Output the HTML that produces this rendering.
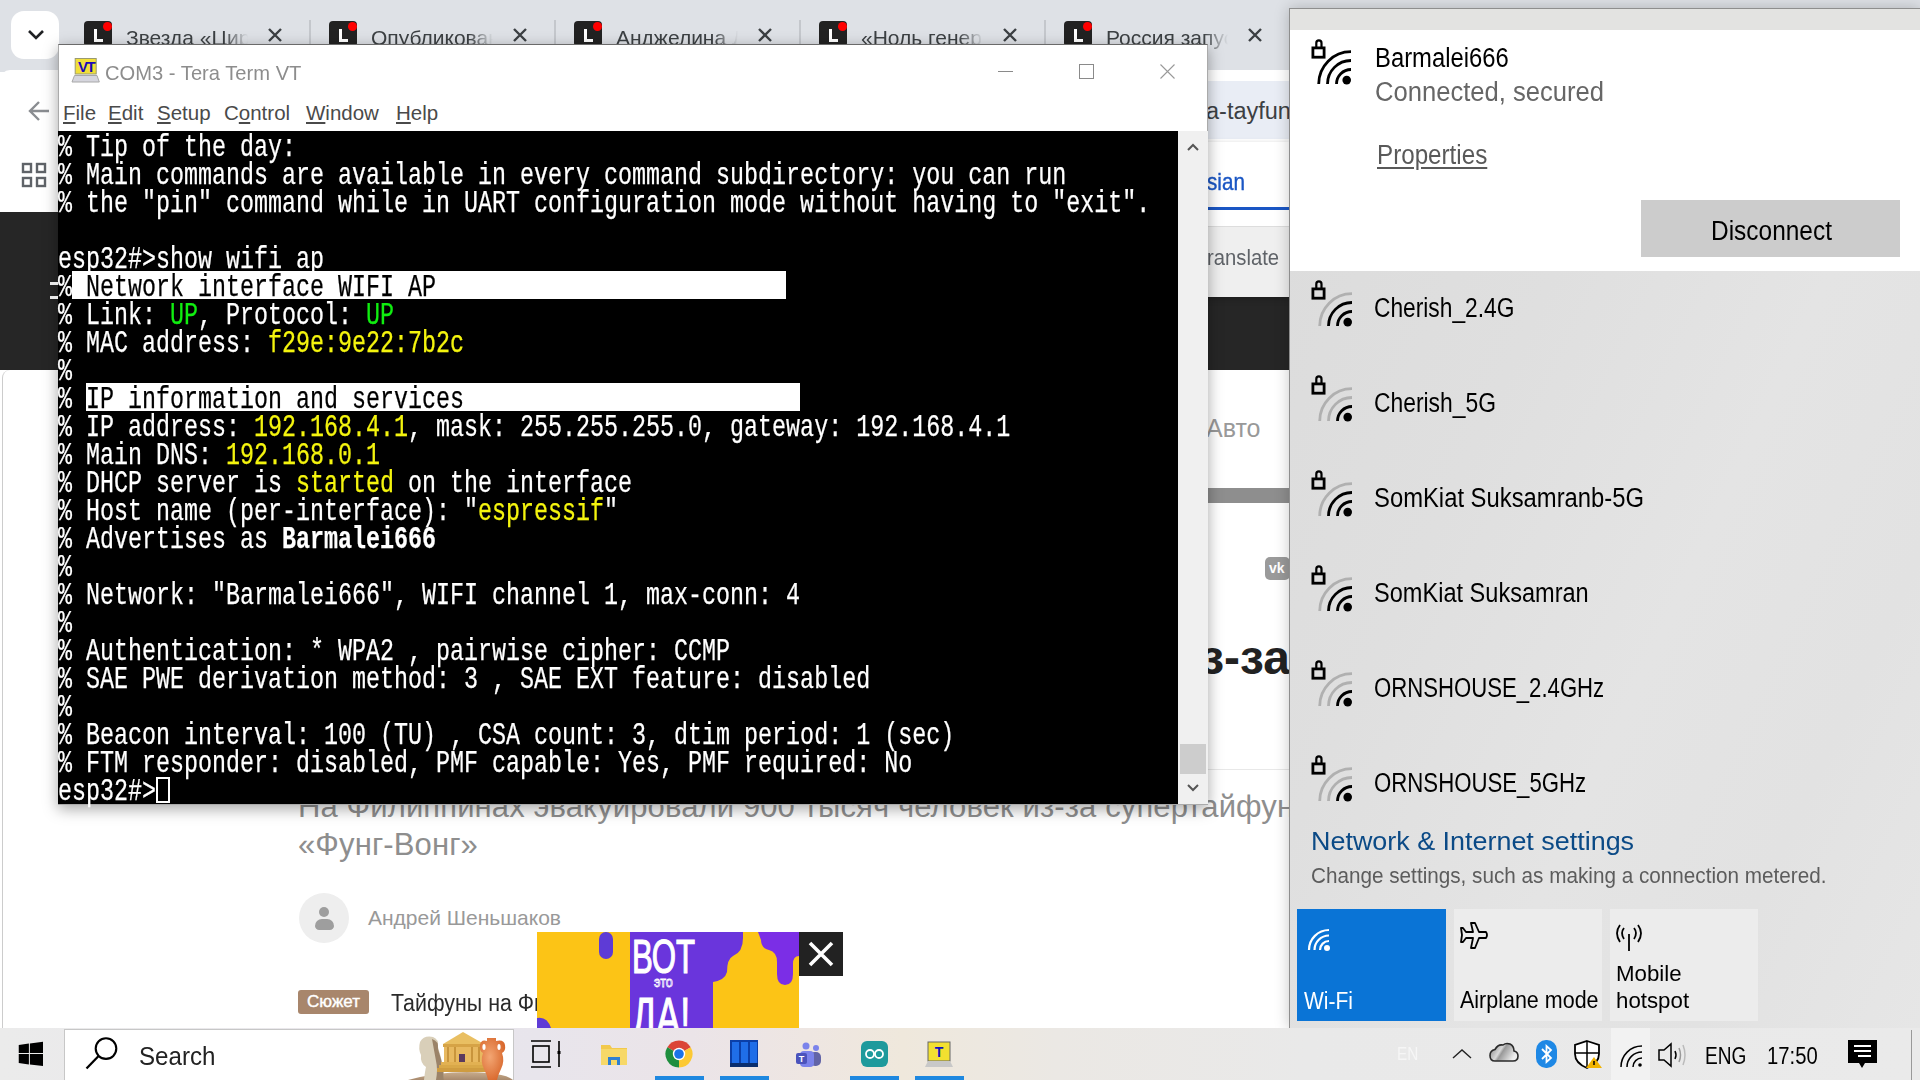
<!DOCTYPE html>
<html><head><meta charset="utf-8">
<style>
*{margin:0;padding:0;box-sizing:border-box}
html,body{width:1920px;height:1080px;overflow:hidden;background:#fff;font-family:"Liberation Sans",sans-serif}
body{position:relative}
.a{position:absolute}
.nw{white-space:nowrap}
.tab-ico{width:28px;height:26px;background:#222;border-radius:4px}
.tab-ico i{position:absolute;left:10px;top:8px;width:3px;height:13px;background:#fff}
.tab-ico b{position:absolute;left:10px;top:18px;width:9px;height:3px;background:#fff}
.tab-ico u{position:absolute;left:19px;top:1px;width:9px;height:9px;background:#f00;border-radius:50%}
.tab-txt{font-size:21px;color:#3c4043;white-space:nowrap;overflow:hidden;width:122px;height:30px;
 -webkit-mask-image:linear-gradient(to right,#000 80%,transparent)}
.tab-sep{width:2px;height:24px;background:#c4c7cc}
.term{font-family:"Liberation Mono",monospace;font-size:32px;line-height:28px;color:#fff;white-space:pre;transform:scaleX(0.72917);transform-origin:0 0;-webkit-text-stroke:0.25px currentColor}
.y{color:#f4f40e}.g{color:#10ee10}.inv{color:#000}
.fly{font-family:"Liberation Sans",sans-serif}
.net{font-size:22px;color:#000}
</style></head><body>

<div class="a" style="left:0;top:0;width:1920px;height:72px;background:#dee1e6"></div>
<div class="a" style="left:11px;top:11px;width:48px;height:48px;background:#fff;border-radius:13px"></div>
<svg class="a" style="left:25px;top:28px" width="22" height="14" viewBox="0 0 22 14"><path d="M4 3 L11 10 L18 3" stroke="#202124" stroke-width="2.6" fill="none"/></svg>
<div class="a tab-ico" style="left:84px;top:20.5px"><i></i><b></b><u></u></div>
<div class="a tab-txt" style="left:126px;top:25.5px">Звезда «Цирка»</div>
<svg class="a" style="left:268px;top:28px" width="14" height="14" viewBox="0 0 14 14"><path d="M1 1L13 13M13 1L1 13" stroke="#3c4043" stroke-width="2.4"/></svg>
<div class="a tab-ico" style="left:329px;top:20.5px"><i></i><b></b><u></u></div>
<div class="a tab-txt" style="left:371px;top:25.5px">Опубликовано</div>
<svg class="a" style="left:513px;top:28px" width="14" height="14" viewBox="0 0 14 14"><path d="M1 1L13 13M13 1L1 13" stroke="#3c4043" stroke-width="2.4"/></svg>
<div class="a tab-sep" style="left:309px;top:20px"></div>
<div class="a tab-ico" style="left:574px;top:20.5px"><i></i><b></b><u></u></div>
<div class="a tab-txt" style="left:616px;top:25.5px">Анджелина Джоли</div>
<svg class="a" style="left:758px;top:28px" width="14" height="14" viewBox="0 0 14 14"><path d="M1 1L13 13M13 1L1 13" stroke="#3c4043" stroke-width="2.4"/></svg>
<div class="a tab-sep" style="left:554px;top:20px"></div>
<div class="a tab-ico" style="left:819px;top:20.5px"><i></i><b></b><u></u></div>
<div class="a tab-txt" style="left:861px;top:25.5px">«Ноль генерации</div>
<svg class="a" style="left:1003px;top:28px" width="14" height="14" viewBox="0 0 14 14"><path d="M1 1L13 13M13 1L1 13" stroke="#3c4043" stroke-width="2.4"/></svg>
<div class="a tab-sep" style="left:799px;top:20px"></div>
<div class="a tab-ico" style="left:1064px;top:20.5px"><i></i><b></b><u></u></div>
<div class="a tab-txt" style="left:1106px;top:25.5px">Россия запускает</div>
<svg class="a" style="left:1248px;top:28px" width="14" height="14" viewBox="0 0 14 14"><path d="M1 1L13 13M13 1L1 13" stroke="#3c4043" stroke-width="2.4"/></svg>
<div class="a tab-sep" style="left:1044px;top:20px"></div>
<div class="a" style="left:0;top:70px;width:1290px;height:85px;background:#fff;border-top-left-radius:10px"></div>
<svg class="a" style="left:27px;top:99px" width="24" height="24" viewBox="0 0 24 24"><path d="M22 12H4M12 3L3 12L12 21" stroke="#8a8d91" stroke-width="2.4" fill="none"/></svg>
<div class="a" style="left:900px;top:81px;width:390px;height:58px;background:#e9edf5;border-radius:30px 0 0 30px"></div>
<div class="a nw" style="left:1206px;top:97.5px;font-size:23.5px;color:#3c4043">a-tayfun</div>
<svg class="a" style="left:21px;top:162px" width="26" height="26" viewBox="0 0 26 26"><g fill="none" stroke="#5f6368" stroke-width="2.4"><rect x="2" y="2" width="8" height="8"/><rect x="16" y="2" width="8" height="8"/><rect x="2" y="16" width="8" height="8"/><rect x="16" y="16" width="8" height="8"/></g></svg>
<div class="a" style="left:0;top:212px;width:1290px;height:158px;background:#262626"></div>
<div class="a" style="left:1000px;top:142px;width:290px;height:155px;background:#fff;box-shadow:0 2px 6px rgba(0,0,0,.25)"></div>
<div class="a nw" style="left:1207px;top:168px;font-size:24px;color:#1a56c4;-webkit-text-stroke:0.4px #1a56c4;transform:scaleX(0.86);transform-origin:0 0">sian</div>
<div class="a" style="left:1100px;top:207px;width:190px;height:3px;background:#1a56c4"></div>
<div class="a" style="left:1000px;top:226px;width:290px;height:71px;background:#efefef;border-top:1px solid #ddd"></div>
<div class="a nw" style="left:1207px;top:245px;font-size:22.5px;color:#5f6368;transform:scaleX(0.9);transform-origin:0 0">ranslate</div>
<div class="a" style="left:2px;top:370px;width:1288px;height:660px;background:#fff;border-top-left-radius:8px;border-left:1px solid #ccc"></div>
<div class="a nw" style="left:1206px;top:414px;font-size:25px;color:#999">Авто</div>
<div class="a" style="left:1000px;top:488px;width:290px;height:15px;background:#8e8e8e"></div>
<div class="a" style="left:1265px;top:557px;width:25px;height:23px;background:#9a9a9a;border-radius:5px"></div><div class="a nw" style="left:1269px;top:560px;font-size:14px;font-weight:bold;color:#fff">vk</div>
<div class="a nw" style="left:1000px;top:630px;font-size:48px;color:#222;font-weight:bold;width:290px;text-align:right;overflow:hidden">из-за</div>
<div class="a" style="left:298px;top:769px;width:992px;height:1px;background:#e8e8e8"></div>
<div class="a nw" style="left:298px;top:788px;font-size:31px;color:#8e8e8e;line-height:38px;width:992px;overflow:hidden;letter-spacing:0.12px">На Филиппинах эвакуировали 900 тысяч человек из-за супертайфуна<br>«Фунг-Вонг»</div>
<div class="a" style="left:299px;top:893px;width:50px;height:50px;border-radius:50%;background:#eee"></div>
<div class="a" style="left:319px;top:906.5px;width:10px;height:10px;border-radius:50%;background:#9e9e9e"></div>
<div class="a" style="left:315px;top:919px;width:19px;height:11px;border-radius:10px 10px 6px 6px;background:#9e9e9e"></div>
<div class="a nw" style="left:368px;top:906px;font-size:21px;color:#999">Андрей Шеньшаков</div>
<div class="a nw" style="left:298px;top:990px;width:71px;height:24px;background:#a8866c;border-radius:3px;color:#fff;font-size:17px;line-height:24px;text-align:center;-webkit-text-stroke:0.4px #fff">Сюжет</div>
<div class="a nw" style="left:391px;top:990px;font-size:23px;color:#2a2a2a;transform:scaleX(0.93);transform-origin:0 0">Тайфуны на Филиппинах</div>
<svg class="a" style="left:537px;top:932px" width="306" height="96" viewBox="0 0 306 96">
<rect x="0" y="0" width="262" height="96" fill="#fcc416"/>
<path d="M93 0 H206 V6 Q206 20 196 24 Q190 27 190 40 Q188 48 176 50 V96 H93 Z" fill="#6a35dc"/>
<path d="M221 0 H262 V24 Q256 24 256 32 V42 Q256 53 248 53 Q240 53 240 42 V30 Q240 20 232 18 Q224 16 224 8 Z" fill="#7b2ee6"/>
<rect x="62" y="0" width="14" height="27" rx="7" fill="#5e3bd6"/>
<path d="M0 86 Q10 84 14 96 H0Z" fill="#5e3bd6"/>
<g fill="#fff" font-family="Liberation Sans" font-weight="bold">
<text x="0" y="0" font-size="40" font-weight="normal" stroke="#fff" stroke-width="1" transform="translate(95,41) scale(0.78,1.2)">ВОТ</text>
<text x="0" y="0" font-size="14" transform="translate(117,55) scale(0.9,1)" fill="none" stroke="#fff" stroke-width="0.8" font-weight="normal">это</text>
<text x="0" y="0" font-size="46" font-weight="normal" stroke="#fff" stroke-width="1" transform="translate(95,104) scale(0.78,1.2)">ДА!</text>
</g>
<rect x="262" y="0" width="44" height="44" fill="#222"/>
<path d="M273 11L295 33M295 11L273 33" stroke="#fff" stroke-width="3.6"/>
</svg>
<div class="a" style="left:58px;top:44px;width:1150px;height:761px;background:#fff;border:1px solid #aaa;border-top-color:#6a6a6a;box-shadow:0 4px 14px rgba(0,0,0,.35)"></div>
<svg class="a" style="left:71px;top:57px" width="30" height="27" viewBox="0 0 30 27">
<rect x="4.2" y="1.5" width="21" height="15.5" fill="#f1df3a" stroke="#9a9a70" stroke-width="1"/>
<text x="15" y="14.6" font-family="Liberation Sans" font-weight="bold" font-size="15" fill="#1a0ab8" text-anchor="middle" letter-spacing="-1.5">VT</text>
<path d="M3.5 18.5 H26 L28.3 25 H1Z" fill="#d6d6de" stroke="#a8a8a8" stroke-width="1"/>
</svg>
<div class="a nw" style="left:105px;top:61px;font-size:21px;color:#8d8d8d;transform:scaleX(0.96);transform-origin:0 0">COM3 - Tera Term VT</div>
<div class="a" style="left:998px;top:71px;width:15px;height:1px;background:#8a8a8a"></div>
<div class="a" style="left:1079px;top:64px;width:15px;height:15px;border:1px solid #8a8a8a"></div>
<svg class="a" style="left:1160px;top:64px" width="15" height="15" viewBox="0 0 15 15"><path d="M0.5 0.5L14.5 14.5M14.5 0.5L0.5 14.5" stroke="#999" stroke-width="1.1"/></svg>
<div class="a nw" style="left:63px;top:101px;font-size:20.5px;color:#4a4a4a"><u>F</u>ile</div>
<div class="a nw" style="left:108px;top:101px;font-size:20.5px;color:#4a4a4a"><u>E</u>dit</div>
<div class="a nw" style="left:157px;top:101px;font-size:20.5px;color:#4a4a4a"><u>S</u>etup</div>
<div class="a nw" style="left:224px;top:101px;font-size:20.5px;color:#4a4a4a">C<u>o</u>ntrol</div>
<div class="a nw" style="left:306px;top:101px;font-size:20.5px;color:#4a4a4a"><u>W</u>indow</div>
<div class="a nw" style="left:396px;top:101px;font-size:20.5px;color:#4a4a4a"><u>H</u>elp</div>
<div class="a" style="left:58px;top:131px;width:1120px;height:673px;background:#000"></div>
<div class="a" style="left:1178px;top:131px;width:30px;height:673px;background:#f0f0f0"></div>
<svg class="a" style="left:1186px;top:142px" width="14" height="10" viewBox="0 0 14 10"><path d="M2 8L7 3L12 8" stroke="#555" stroke-width="2" fill="none"/></svg>
<div class="a" style="left:1180px;top:744px;width:26px;height:30px;background:#cdcdcd"></div>
<svg class="a" style="left:1186px;top:783px" width="14" height="10" viewBox="0 0 14 10"><path d="M2 2L7 7L12 2" stroke="#555" stroke-width="2" fill="none"/></svg>
<div class="a" style="left:72px;top:271px;width:714px;height:28px;background:#fff"></div><div class="a" style="left:86px;top:383px;width:714px;height:28px;background:#fff"></div>
<div class="a term" style="left:58px;top:133.5px">% Tip of the day:
% Main commands are available in every command subdirectory: you can run
% the ″pin″ command while in UART configuration mode without having to ″exit″.

esp32#>show wifi ap
%<span class="inv"> Network interface WIFI AP                         </span>
% Link: <span class="g">UP</span>, Protocol: <span class="g">UP</span>
% MAC address: <span class="y">f29e:9e22:7b2c</span>
%
%<span class="inv"> IP information and services                        </span>
% IP address: <span class="y">192.168.4.1</span>, mask: 255.255.255.0, gateway: 192.168.4.1
% Main DNS: <span class="y">192.168.0.1</span>
% DHCP server is <span class="y">started</span> on the interface
% Host name (per-interface): ″<span class="y">espressif</span>″
% Advertises as <b>Barmalei666</b>
%
% Network: ″Barmalei666″, WIFI channel 1, max-conn: 4
%
% Authentication: * WPA2 , pairwise cipher: CCMP
% SAE PWE derivation method: 3 , SAE EXT feature: disabled
%
% Beacon interval: 100 (TU) , CSA count: 3, dtim period: 1 (sec)
% FTM responder: disabled, PMF capable: Yes, PMF required: No
esp32#></div>
<div class="a" style="left:156px;top:777px;width:14px;height:26px;border:2px solid #fff"></div>
<div class="a" style="left:50px;top:282px;width:8px;height:3px;background:#e8e8e8"></div><div class="a" style="left:50px;top:296px;width:8px;height:3px;background:#e8e8e8"></div>
<div class="a" style="left:1289px;top:8px;width:631px;height:1020px;background:linear-gradient(115deg,#dbdbdb 0%,#dfdfdf 35%,#e4e4e4 60%,#e2e2e2 80%,#e6e6e6 100%);border-left:1px solid #8e8e8e;border-top:1px solid #8e8e8e;box-shadow:0 0 14px rgba(0,0,0,.22)"></div>
<div class="a" style="left:1290px;top:9px;width:630px;height:21px;background:#e3e3e1"></div>
<div class="a" style="left:1290px;top:30px;width:630px;height:241px;background:#fff"></div>
<svg class="a" style="left:1310px;top:38px" width="17" height="22" viewBox="0 0 17 22"><rect x="2.9" y="9.9" width="11.2" height="9.3" fill="none" stroke="#000" stroke-width="2.8"/><path d="M6.3 9.5 V5 A2.6 2.6 0 0 1 11.5 5 V9.5" fill="none" stroke="#000" stroke-width="2.2"/></svg>
<svg class="a" style="left:1315px;top:48px" width="40" height="40" viewBox="-36 -36 40 40"><g transform="translate(0,0)"><path d="M-14.5 0 A14.5 14.5 0 0 1 0 -14.5" stroke="#000" stroke-width="2.8" fill="none" transform="translate(0,0)"/><path d="M-23.5 0 A23.5 23.5 0 0 1 0 -23.5" stroke="#000" stroke-width="2.8" fill="none" transform="translate(0,0)"/><path d="M-32.3 0 A32.3 32.3 0 0 1 0 -32.3" stroke="#000" stroke-width="2.8" fill="none" transform="translate(0,0)"/><circle cx="-4.3" cy="-3.9" r="4.3" fill="#000"/></g></svg>
<div class="a nw fly" style="left:1375px;top:43px;font-size:27px;color:#000;transform:scaleX(0.882);transform-origin:0 0;">Barmalei666</div>
<div class="a nw fly" style="left:1375px;top:77px;font-size:27px;color:#666;transform:scaleX(0.948);transform-origin:0 0;">Connected, secured</div>
<div class="a nw fly" style="left:1377px;top:140px;font-size:27px;color:#595959;transform:scaleX(0.896);transform-origin:0 0;text-decoration:underline;text-underline-offset:3px">Properties</div>
<div class="a" style="left:1641px;top:200px;width:259px;height:57px;background:#cccccc"></div>
<div class="a nw fly" style="left:1711px;top:215px;font-size:27.5px;color:#000;transform:scaleX(0.889);transform-origin:0 0;">Disconnect</div>
<svg class="a" style="left:1310px;top:279px" width="17" height="22" viewBox="0 0 17 22"><rect x="2.9" y="9.9" width="11.2" height="9.3" fill="none" stroke="#000" stroke-width="2.8"/><path d="M6.3 9.5 V5 A2.6 2.6 0 0 1 11.5 5 V9.5" fill="none" stroke="#000" stroke-width="2.2"/></svg>
<svg class="a" style="left:1316px;top:290px" width="40" height="40" viewBox="-36 -36 40 40"><g transform="translate(0,0)"><path d="M-14.5 0 A14.5 14.5 0 0 1 0 -14.5" stroke="#000" stroke-width="2.8" fill="none" transform="translate(0,0)"/><path d="M-23.5 0 A23.5 23.5 0 0 1 0 -23.5" stroke="#000" stroke-width="2.8" fill="none" transform="translate(0,0)"/><path d="M-32.3 0 A32.3 32.3 0 0 1 0 -32.3" stroke="#b0b0b0" stroke-width="2.8" fill="none" transform="translate(0,0)"/><circle cx="-4.3" cy="-3.9" r="4.3" fill="#000"/></g></svg>
<div class="a nw fly" style="left:1374px;top:293px;font-size:27px;color:#000;transform:scaleX(0.8425925925925926);transform-origin:0 0;">Cherish_2.4G</div>
<svg class="a" style="left:1310px;top:374px" width="17" height="22" viewBox="0 0 17 22"><rect x="2.9" y="9.9" width="11.2" height="9.3" fill="none" stroke="#000" stroke-width="2.8"/><path d="M6.3 9.5 V5 A2.6 2.6 0 0 1 11.5 5 V9.5" fill="none" stroke="#000" stroke-width="2.2"/></svg>
<svg class="a" style="left:1316px;top:385px" width="40" height="40" viewBox="-36 -36 40 40"><g transform="translate(0,0)"><path d="M-14.5 0 A14.5 14.5 0 0 1 0 -14.5" stroke="#000" stroke-width="2.8" fill="none" transform="translate(0,0)"/><path d="M-23.5 0 A23.5 23.5 0 0 1 0 -23.5" stroke="#b0b0b0" stroke-width="2.8" fill="none" transform="translate(0,0)"/><path d="M-32.3 0 A32.3 32.3 0 0 1 0 -32.3" stroke="#b0b0b0" stroke-width="2.8" fill="none" transform="translate(0,0)"/><circle cx="-4.3" cy="-3.9" r="4.3" fill="#000"/></g></svg>
<div class="a nw fly" style="left:1374px;top:388px;font-size:27px;color:#000;transform:scaleX(0.8464444444444444);transform-origin:0 0;">Cherish_5G</div>
<svg class="a" style="left:1310px;top:469px" width="17" height="22" viewBox="0 0 17 22"><rect x="2.9" y="9.9" width="11.2" height="9.3" fill="none" stroke="#000" stroke-width="2.8"/><path d="M6.3 9.5 V5 A2.6 2.6 0 0 1 11.5 5 V9.5" fill="none" stroke="#000" stroke-width="2.2"/></svg>
<svg class="a" style="left:1316px;top:480px" width="40" height="40" viewBox="-36 -36 40 40"><g transform="translate(0,0)"><path d="M-14.5 0 A14.5 14.5 0 0 1 0 -14.5" stroke="#000" stroke-width="2.8" fill="none" transform="translate(0,0)"/><path d="M-23.5 0 A23.5 23.5 0 0 1 0 -23.5" stroke="#000" stroke-width="2.8" fill="none" transform="translate(0,0)"/><path d="M-32.3 0 A32.3 32.3 0 0 1 0 -32.3" stroke="#b0b0b0" stroke-width="2.8" fill="none" transform="translate(0,0)"/><circle cx="-4.3" cy="-3.9" r="4.3" fill="#000"/></g></svg>
<div class="a nw fly" style="left:1374px;top:483px;font-size:27px;color:#000;transform:scaleX(0.8820740740740741);transform-origin:0 0;">SomKiat Suksamranb-5G</div>
<svg class="a" style="left:1310px;top:564px" width="17" height="22" viewBox="0 0 17 22"><rect x="2.9" y="9.9" width="11.2" height="9.3" fill="none" stroke="#000" stroke-width="2.8"/><path d="M6.3 9.5 V5 A2.6 2.6 0 0 1 11.5 5 V9.5" fill="none" stroke="#000" stroke-width="2.2"/></svg>
<svg class="a" style="left:1316px;top:575px" width="40" height="40" viewBox="-36 -36 40 40"><g transform="translate(0,0)"><path d="M-14.5 0 A14.5 14.5 0 0 1 0 -14.5" stroke="#000" stroke-width="2.8" fill="none" transform="translate(0,0)"/><path d="M-23.5 0 A23.5 23.5 0 0 1 0 -23.5" stroke="#000" stroke-width="2.8" fill="none" transform="translate(0,0)"/><path d="M-32.3 0 A32.3 32.3 0 0 1 0 -32.3" stroke="#b0b0b0" stroke-width="2.8" fill="none" transform="translate(0,0)"/><circle cx="-4.3" cy="-3.9" r="4.3" fill="#000"/></g></svg>
<div class="a nw fly" style="left:1374px;top:578px;font-size:27px;color:#000;transform:scaleX(0.8724444444444445);transform-origin:0 0;">SomKiat Suksamran</div>
<svg class="a" style="left:1310px;top:659px" width="17" height="22" viewBox="0 0 17 22"><rect x="2.9" y="9.9" width="11.2" height="9.3" fill="none" stroke="#000" stroke-width="2.8"/><path d="M6.3 9.5 V5 A2.6 2.6 0 0 1 11.5 5 V9.5" fill="none" stroke="#000" stroke-width="2.2"/></svg>
<svg class="a" style="left:1316px;top:670px" width="40" height="40" viewBox="-36 -36 40 40"><g transform="translate(0,0)"><path d="M-14.5 0 A14.5 14.5 0 0 1 0 -14.5" stroke="#000" stroke-width="2.8" fill="none" transform="translate(0,0)"/><path d="M-23.5 0 A23.5 23.5 0 0 1 0 -23.5" stroke="#b0b0b0" stroke-width="2.8" fill="none" transform="translate(0,0)"/><path d="M-32.3 0 A32.3 32.3 0 0 1 0 -32.3" stroke="#b0b0b0" stroke-width="2.8" fill="none" transform="translate(0,0)"/><circle cx="-4.3" cy="-3.9" r="4.3" fill="#000"/></g></svg>
<div class="a nw fly" style="left:1374px;top:673px;font-size:27px;color:#000;transform:scaleX(0.8204444444444445);transform-origin:0 0;">ORNSHOUSE_2.4GHz</div>
<svg class="a" style="left:1310px;top:754px" width="17" height="22" viewBox="0 0 17 22"><rect x="2.9" y="9.9" width="11.2" height="9.3" fill="none" stroke="#000" stroke-width="2.8"/><path d="M6.3 9.5 V5 A2.6 2.6 0 0 1 11.5 5 V9.5" fill="none" stroke="#000" stroke-width="2.2"/></svg>
<svg class="a" style="left:1316px;top:765px" width="40" height="40" viewBox="-36 -36 40 40"><g transform="translate(0,0)"><path d="M-14.5 0 A14.5 14.5 0 0 1 0 -14.5" stroke="#000" stroke-width="2.8" fill="none" transform="translate(0,0)"/><path d="M-23.5 0 A23.5 23.5 0 0 1 0 -23.5" stroke="#b0b0b0" stroke-width="2.8" fill="none" transform="translate(0,0)"/><path d="M-32.3 0 A32.3 32.3 0 0 1 0 -32.3" stroke="#b0b0b0" stroke-width="2.8" fill="none" transform="translate(0,0)"/><circle cx="-4.3" cy="-3.9" r="4.3" fill="#000"/></g></svg>
<div class="a nw fly" style="left:1374px;top:768px;font-size:27px;color:#000;transform:scaleX(0.8223703703703704);transform-origin:0 0;">ORNSHOUSE_5GHz</div>
<div class="a nw fly" style="left:1311px;top:826px;font-size:26px;color:#0b4a86;transform:scaleX(1.035);transform-origin:0 0;">Network &amp; Internet settings</div>
<div class="a nw fly" style="left:1311px;top:862.5px;font-size:22.5px;color:#5c5c5c;transform:scaleX(0.92);transform-origin:0 0;">Change settings, such as making a connection metered.</div>
<div class="a" style="left:1297px;top:909px;width:149px;height:112px;background:#0a74d6"></div>
<svg class="a" style="left:1307px;top:928px" width="26" height="24" viewBox="0 0 26 24"><g fill="none" stroke="#fff" stroke-width="2.2"><path d="M2 22A20 20 0 0 1 22 2"/><path d="M7.5 22A14.5 14.5 0 0 1 22 7.5"/><path d="M13 22A9 9 0 0 1 22 13"/></g><circle cx="20" cy="20" r="3" fill="#fff"/></svg>
<div class="a nw fly" style="left:1304px;top:987.5px;font-size:23.5px;color:#fff;transform:scaleX(0.893);transform-origin:0 0;">Wi-Fi</div>
<div class="a" style="left:1454px;top:909px;width:148px;height:112px;background:#ececec"></div>
<svg class="a" style="left:1459px;top:920px" width="30" height="32" viewBox="0 0 30 32"><path d="M12 3 L16 3 L20 12 L27 12 Q29 15 27 18 L20 18 L16 28 L12 28 L14 18 L7 18 L4 22 L2 22 L3 15 L2 8 L4 8 L7 12 L14 12 Z" fill="none" stroke="#000" stroke-width="1.8" stroke-linejoin="round"/></svg>
<div class="a nw fly" style="left:1460px;top:987px;font-size:23px;color:#000;transform:scaleX(0.934);transform-origin:0 0;">Airplane mode</div>
<div class="a" style="left:1610px;top:909px;width:148px;height:112px;background:#ececec"></div>
<svg class="a" style="left:1614px;top:922px" width="30" height="30" viewBox="0 0 30 30"><g fill="none" stroke="#000" stroke-width="1.8"><path d="M15 12V29"/><path d="M10 6Q6 11 10 17"/><path d="M20 6Q24 11 20 17"/><path d="M6 3Q0 11 6 20"/><path d="M24 3Q30 11 24 20"/></g></svg>
<div class="a nw fly" style="left:1616px;top:959.5px;font-size:22.5px;color:#000;transform:scaleX(0.99);transform-origin:0 0;line-height:27.5px">Mobile<br>hotspot</div>
<div class="a" style="left:0;top:1028px;width:1920px;height:52px;background:linear-gradient(90deg,#ebebeb 0%,#e8e5ec 28%,#ebe4e8 36%,#eee6e2 42%,#efe8dc 47%,#ebe8e4 55%,#e9e9e9 68%,#eaeaea 100%)"></div>
<svg class="a" style="left:0px;top:1028px" width="50" height="52" viewBox="0 1028 50 52"><g fill="#000"><path d="M18.75 1044.9 L28.9 1043.5 V1053.1 H18.75Z"/><path d="M29.9 1043.4 L43 1041.75 V1053.1 H29.9Z"/><path d="M18.75 1054.1 H28.9 V1064.5 L18.75 1063Z"/><path d="M29.9 1054.1 H43 V1066 L29.9 1064.6Z"/></g></svg>
<div class="a" style="left:64px;top:1029px;width:450px;height:51px;background:#fff;border:1px solid #c7c7c7;border-bottom:none"></div>
<svg class="a" style="left:80px;top:1033px" width="40" height="40" viewBox="0 0 40 40"><circle cx="26" cy="15.6" r="10.3" fill="none" stroke="#000" stroke-width="2.1"/><path d="M18.6 23L6.5 35.5" stroke="#000" stroke-width="2.3"/></svg>
<div class="a nw" style="left:139px;top:1041.5px;font-size:25px;color:#222;transform:scaleX(0.965);transform-origin:0 0">Search</div>
<svg class="a" style="left:408px;top:1029px" width="105" height="51" viewBox="0 0 105 51">
<defs><linearGradient id="gnd" x1="0" y1="0" x2="0" y2="1"><stop offset="0" stop-color="#c9ad8c"/><stop offset="1" stop-color="#a88a6e"/></linearGradient>
<radialGradient id="vase" cx="0.4" cy="0.45" r="0.6"><stop offset="0" stop-color="#f3a673"/><stop offset="1" stop-color="#d9692e"/></radialGradient></defs>
<path d="M0 51 Q40 40 80 44 Q100 46 105 51Z" fill="url(#gnd)"/>
<path d="M12 13 Q16 6 25 8 Q31 10 30 18 L32 25 Q35 35 36 51 H16 Q17 42 18 38 Q12 34 13 26 Q10 20 12 13Z" fill="#d9cfb9"/>
<path d="M24 10 Q31 12 30 20 L33 30 Q36 40 36 51 H28 Q30 40 28 32 Z" fill="#9b8368"/>
<path d="M35 15 L55 3 L76 15Z" fill="#e9bf62"/>
<rect x="35" y="15" width="41" height="3" fill="#d6a346"/>
<rect x="36" y="18" width="39" height="15" fill="#e8b960"/>
<g fill="#c9953c"><rect x="39" y="18" width="2" height="15"/><rect x="46" y="18" width="2" height="15"/><rect x="63" y="18" width="2" height="15"/><rect x="70" y="18" width="2" height="15"/></g>
<rect x="51" y="25" width="6" height="8" fill="#5b3a5e"/>
<rect x="33" y="33" width="45" height="3" fill="#e2b152"/><rect x="31" y="36" width="49" height="3" fill="#d9a848"/><rect x="29" y="39" width="53" height="4" fill="#cf9c40"/>
<path d="M79 9 H88 V12 Q96 10 97 16 Q98 22 94 24 Q97 32 93 40 Q90 46 89 51 H80 Q79 46 76 40 Q72 32 75 24 Q71 22 72 16 Q73 10 79 12Z" fill="url(#vase)"/>
<ellipse cx="76" cy="18" rx="1.6" ry="3" fill="#fff"/><ellipse cx="91" cy="18" rx="1.6" ry="3" fill="#fff"/>
</svg>
<svg class="a" style="left:530px;top:1040px" width="32" height="28" viewBox="0 0 32 28"><g fill="none" stroke="#000" stroke-width="1.6"><path d="M1 1H21M1 27H21"/><rect x="3" y="6" width="16" height="16"/><path d="M29 1V27"/></g><rect x="27.5" y="11" width="3" height="3" fill="#000"/></svg>
<svg class="a" style="left:600px;top:1043px" width="28" height="24" viewBox="0 0 28 24"><path d="M1 2H10L12 5H27V22H1Z" fill="#f2c94c"/><rect x="1" y="6" width="26" height="16" fill="#f7d868"/><path d="M8 22V14H20V22H17V17H11V22Z" fill="#2f7fd1"/></svg>
<svg class="a" style="left:665px;top:1040px" width="28" height="28" viewBox="0 0 28 28">
<path d="M14 14 L25.7 7.25 A13.5 13.5 0 0 0 2.3 7.25 Z" fill="#db4437"/>
<path d="M14 14 L25.7 7.25 A13.5 13.5 0 0 1 14 27.5 Z" fill="#fcc934"/>
<path d="M14 14 L14 27.5 A13.5 13.5 0 0 1 2.3 7.25 Z" fill="#1e8e3e"/>
<circle cx="14" cy="14" r="6.2" fill="#fff"/><circle cx="14" cy="14" r="4.8" fill="#1a73e8"/></svg>
<svg class="a" style="left:730px;top:1040px" width="28" height="27" viewBox="0 0 28 27"><rect x="0" y="0" width="28" height="27" fill="#0b3fa8"/><rect x="2" y="2" width="7" height="21" fill="#1f6ee8"/><rect x="11" y="2" width="7" height="21" fill="#1f6ee8"/><rect x="20" y="2" width="7" height="21" fill="#1f6ee8"/><rect x="0" y="23" width="28" height="4" fill="#0a2e6e"/></svg>
<svg class="a" style="left:795px;top:1042px" width="27" height="25" viewBox="0 0 27 25"><circle cx="11" cy="4" r="3.5" fill="#7b83eb"/><circle cx="21" cy="6" r="3" fill="#7b83eb"/><rect x="15" y="10" width="11" height="14" rx="5" fill="#6264a7"/><rect x="5" y="9" width="14" height="16" rx="4" fill="#7b83eb"/><rect x="1" y="11" width="11" height="11" rx="2" fill="#4b53bc"/><text x="6.5" y="20" font-family="Liberation Sans" font-weight="bold" font-size="9" fill="#fff" text-anchor="middle">T</text></svg>
<svg class="a" style="left:861px;top:1041px" width="27" height="26" viewBox="0 0 27 26"><rect x="0" y="0" width="27" height="26" rx="6" fill="#1e9a9c"/><g fill="none" stroke="#fff" stroke-width="1.8"><circle cx="9" cy="13" r="4"/><circle cx="18" cy="13" r="4"/></g></svg>
<svg class="a" style="left:924px;top:1041px" width="30" height="27" viewBox="0 0 30 27"><rect x="4" y="1" width="22" height="19" fill="#f2e030" stroke="#666" stroke-width="1"/><text x="15" y="16" font-family="Liberation Sans" font-weight="bold" font-size="14" fill="#1010c0" text-anchor="middle">T</text><path d="M4 20 L1 26 H29 L26 20Z" fill="#c8c8c8"/></svg>
<div class="a" style="left:655px;top:1076px;width:49px;height:4px;background:#1e88e0"></div>
<div class="a" style="left:720px;top:1076px;width:49px;height:4px;background:#1e88e0"></div>
<div class="a" style="left:850px;top:1076px;width:49px;height:4px;background:#1e88e0"></div>
<div class="a" style="left:915px;top:1076px;width:49px;height:4px;background:#1e88e0"></div>
<div class="a nw" style="left:1397px;top:1044px;font-size:18px;color:#f6f6f6;transform:scaleX(0.85);transform-origin:0 0">EN</div>
<svg class="a" style="left:1451px;top:1048px" width="22" height="12" viewBox="0 0 22 12"><path d="M2 10L11 2L20 10" stroke="#222" stroke-width="1.4" fill="none"/></svg>
<svg class="a" style="left:1489px;top:1041px" width="30" height="22" viewBox="0 0 30 22"><defs><linearGradient id="od" x1="0" y1="0" x2="1" y2="0.4"><stop offset="0" stop-color="#777"/><stop offset="0.45" stop-color="#d8d8d8"/><stop offset="0.55" stop-color="#999"/><stop offset="1" stop-color="#eee"/></linearGradient></defs><path d="M6 20 Q1 20 1 14.5 Q1 9.5 6 8.5 Q9 3 14 4 Q17 1.5 21 3 Q25 5 25 10 Q29 11 29 15 Q29 20 24 20Z" fill="url(#od)" stroke="#2a2a2a" stroke-width="1.6"/></svg>
<svg class="a" style="left:1536px;top:1040px" width="21" height="28" viewBox="0 0 21 28"><rect x="0" y="0" width="21" height="28" rx="10" fill="#1e88e5"/><path d="M6 9L15 18L10.5 22V6L15 10L6 19" stroke="#fff" stroke-width="1.8" fill="none"/></svg>
<svg class="a" style="left:1574px;top:1040px" width="30" height="29" viewBox="0 0 30 29"><path d="M13 1 L25 5 V14 Q25 23 13 28 Q1 23 1 14 V5 Z" fill="#fff" stroke="#000" stroke-width="1.8"/><path d="M13 1V28M1 13H25" stroke="#000" stroke-width="1.5"/><path d="M20 17 L28 28 H12Z" fill="#f2b400"/><path d="M20 21V25" stroke="#000" stroke-width="1.5"/></svg>
<div class="a" style="left:1611px;top:1028px;width:39px;height:52px;background:#f2f2f2"></div>
<svg class="a" style="left:1619px;top:1044px" width="26" height="24" viewBox="0 0 26 24"><g fill="none" stroke="#000" stroke-width="1.5"><path d="M2 23A21 21 0 0 1 23 2"/><path d="M8 23A15 15 0 0 1 23 8"/><path d="M14 23A9 9 0 0 1 23 14"/></g><circle cx="21" cy="21" r="1.8" fill="#000"/></svg>
<svg class="a" style="left:1658px;top:1042px" width="28" height="26" viewBox="0 0 28 26"><path d="M1 8H6L13 2V24L6 18H1Z" fill="none" stroke="#000" stroke-width="1.5"/><path d="M17 9Q19 13 17 17" stroke="#000" stroke-width="1.5" fill="none"/><path d="M21 6Q24 13 21 20" stroke="#999" stroke-width="1.5" fill="none"/><path d="M25 3Q29 13 25 23" stroke="#bbb" stroke-width="1.5" fill="none"/></svg>
<div class="a nw fly" style="left:1705px;top:1042.5px;font-size:23px;color:#000;transform:scaleX(0.83);transform-origin:0 0;">ENG</div>
<div class="a nw fly" style="left:1767px;top:1042.5px;font-size:23px;color:#000;transform:scaleX(0.88);transform-origin:0 0;">17:50</div>
<svg class="a" style="left:1848px;top:1040px" width="29" height="30" viewBox="0 0 29 30"><path d="M0 0H29V23H17L14 28L11 23H0Z" fill="#000"/><path d="M6 6H23M6 11H23M10 16H23" stroke="#fff" stroke-width="1.8"/></svg>
<div class="a" style="left:1911px;top:1030px;width:1px;height:50px;background:#999"></div>
</body></html>
